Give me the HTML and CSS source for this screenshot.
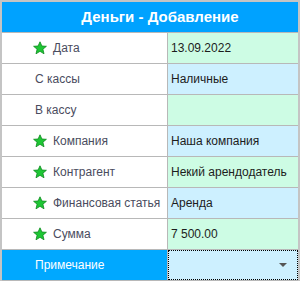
FILE: index.html
```html
<!DOCTYPE html>
<html lang="ru">
<head>
    <meta charset="UTF-8">
    <title>Деньги - Добавление</title>
    <link rel="stylesheet" href="styles.css">
</head>
<body>
    <div class="window">
        <div class="title">Деньги - Добавление</div>

        <div class="row">
            <div class="label"><svg class="star" viewBox="0 0 14 14"><path d="M7 0.8 L8.9 5 L13.4 5.3 L9.9 8.2 L11 12.8 L7 10.3 L3 12.8 L4.1 8.2 L0.6 5.3 L5.1 5 Z"/></svg>Дата</div>
            <div class="value green">13.09.2022</div>
        </div>
        <div class="row">
            <div class="label plain">С кассы</div>
            <div class="value blue">Наличные</div>
        </div>
        <div class="row">
            <div class="label plain">В кассу</div>
            <div class="value green"></div>
        </div>
        <div class="row">
            <div class="label"><svg class="star" viewBox="0 0 14 14"><path d="M7 0.8 L8.9 5 L13.4 5.3 L9.9 8.2 L11 12.8 L7 10.3 L3 12.8 L4.1 8.2 L0.6 5.3 L5.1 5 Z"/></svg>Компания</div>
            <div class="value blue">Наша компания</div>
        </div>
        <div class="row">
            <div class="label"><svg class="star" viewBox="0 0 14 14"><path d="M7 0.8 L8.9 5 L13.4 5.3 L9.9 8.2 L11 12.8 L7 10.3 L3 12.8 L4.1 8.2 L0.6 5.3 L5.1 5 Z"/></svg>Контрагент</div>
            <div class="value green">Некий арендодатель</div>
        </div>
        <div class="row">
            <div class="label"><svg class="star" viewBox="0 0 14 14"><path d="M7 0.8 L8.9 5 L13.4 5.3 L9.9 8.2 L11 12.8 L7 10.3 L3 12.8 L4.1 8.2 L0.6 5.3 L5.1 5 Z"/></svg>Финансовая статья</div>
            <div class="value blue">Аренда</div>
        </div>
        <div class="row">
            <div class="label"><svg class="star" viewBox="0 0 14 14"><path d="M7 0.8 L8.9 5 L13.4 5.3 L9.9 8.2 L11 12.8 L7 10.3 L3 12.8 L4.1 8.2 L0.6 5.3 L5.1 5 Z"/></svg>Сумма</div>
            <div class="value green">7 500.00</div>
        </div>
        <div class="row selected">
            <div class="label plain">Примечание</div>
            <div class="value blue focus"><span class="arrow"></span></div>
        </div>
    </div>
</body>
</html>
```

FILE: styles.css
```css
body {
    margin: 0;
    font-family: "Liberation Sans", sans-serif;
    font-size: 12px;
}
.window {
    width: 300px;
    height: 281px;
    box-sizing: border-box;
    border: 2px solid #c4c4c4;
    border-bottom: none;
    background-color: #fff;
}
.title {
    height: 30px;
    line-height: 30px;
    padding-left: 20px;
    background-color: #00a2ff;
    color: #fff;
    text-align: center;
    font-weight: bold;
    font-size: 15px;
    border-bottom: 1px solid #b8b8b8;
}
.row {
    display: flex;
    height: 30px;
    border-bottom: 1px solid #b8b8b8;
}
.label {
    width: 166px;
    box-sizing: border-box;
    border-right: 1px solid #b8b8b8;
    display: flex;
    align-items: center;
    gap: 6px;
    padding-left: 31px;
    color: #4a4c5e;
    white-space: nowrap;
    overflow: hidden;
}
.label.plain {
    padding-left: 33px;
}
.star {
    width: 14px;
    height: 14px;
    fill: #1ec634;
    stroke: #0a8a1c;
    stroke-width: 0.8;
    stroke-linejoin: round;
}
.value {
    flex: 1;
    display: flex;
    align-items: center;
    padding-left: 3px;
    color: #1c1c1c;
}
.green {
    background-color: #cdfce4;
}
.blue {
    background-color: #cdf0ff;
}
.selected .label {
    background-color: #00a8ff;
    color: #fff;
}
.focus {
    border: 1px dotted #000;
    justify-content: flex-end;
    padding-right: 10px;
}
.arrow {
    width: 0;
    height: 0;
    border-left: 4px solid transparent;
    border-right: 4px solid transparent;
    border-top: 4px solid #555;
}
```
